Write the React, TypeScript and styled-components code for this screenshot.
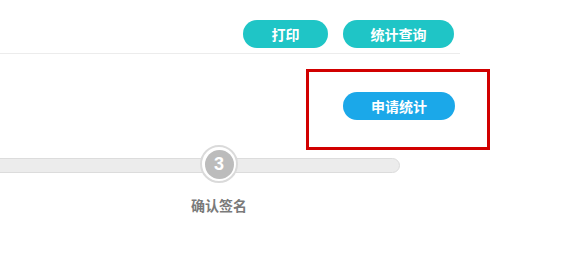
import React from "react";
import styled, { createGlobalStyle } from "styled-components";

const Global = createGlobalStyle`
  html, body { margin: 0; padding: 0; background: #fff; }
  body { font-family: "Noto Sans CJK SC", "Liberation Sans", sans-serif; }
  #root { width: 571px; height: 253px; overflow: hidden; }
`;

const Page = styled.div`
  width: 571px;
  height: 253px;
  display: flex;
  flex-direction: column;
`;

const Toolbar = styled.div`
  width: 460px;
  box-sizing: border-box;
  display: flex;
  justify-content: flex-end;
  gap: 15px;
  padding: 20px 6px 5px 0;
  border-bottom: 1px solid #ececec;
`;

const Pill = styled.button<{ $color: string; $w: number }>`
  width: ${(p) => p.$w}px;
  height: 28px;
  border: none;
  border-radius: 14px;
  background: ${(p) => p.$color};
  color: #fff;
  font-family: "Noto Sans CJK SC", sans-serif;
  font-weight: 700;
  font-size: 14px;
  padding: 0;
  display: flex;
  align-items: center;
  justify-content: center;
`;

const Highlight = styled.div`
  margin: 15px 0 0 306px;
  width: 184px;
  height: 81px;
  box-sizing: border-box;
  border: 3px solid #d10000;
  padding: 20px 0 0 34px;
`;

const Steps = styled.div`
  position: relative;
  margin-top: 7px;
  width: 400px;
  height: 70px;
`;

const Track = styled.div`
  position: absolute;
  left: -20px;
  top: 1px;
  width: 420px;
  height: 15px;
  box-sizing: border-box;
  border: 1px solid #dcdcdc;
  border-radius: 8px;
  background: #ececec;
`;

const StepNode = styled.div`
  position: absolute;
  left: 179px;
  top: -12px;
  width: 80px;
  display: flex;
  flex-direction: column;
  align-items: center;
  gap: 12px;
`;

const Circle = styled.div`
  width: 38px;
  height: 38px;
  box-sizing: border-box;
  border-radius: 50%;
  border: 2px solid #dadada;
  background: #fff;
  display: flex;
  align-items: center;
  justify-content: center;
`;

const Inner = styled.div`
  width: 29px;
  height: 29px;
  border-radius: 50%;
  background: #bcbcbc;
  color: #fff;
  font-family: "Liberation Sans", Arial, sans-serif;
  font-weight: 700;
  font-size: 18px;
  display: flex;
  align-items: center;
  justify-content: center;
`;

const Label = styled.div`
  font-family: "Noto Sans CJK SC", sans-serif;
  font-size: 14px;
  font-weight: 700;
  color: #7a7a7a;
  white-space: nowrap;
`;

export default function App() {
  return (
    <>
      <Global />
      <Page>
        <Toolbar>
          <Pill $color="#1fc5c6" $w={85}>打印</Pill>
          <Pill $color="#1fc5c6" $w={111}>统计查询</Pill>
        </Toolbar>
        <Highlight>
          <Pill $color="#1ba8e9" $w={112}>申请统计</Pill>
        </Highlight>
        <Steps>
          <Track />
          <StepNode>
            <Circle>
              <Inner>3</Inner>
            </Circle>
            <Label>确认签名</Label>
          </StepNode>
        </Steps>
      </Page>
    </>
  );
}
